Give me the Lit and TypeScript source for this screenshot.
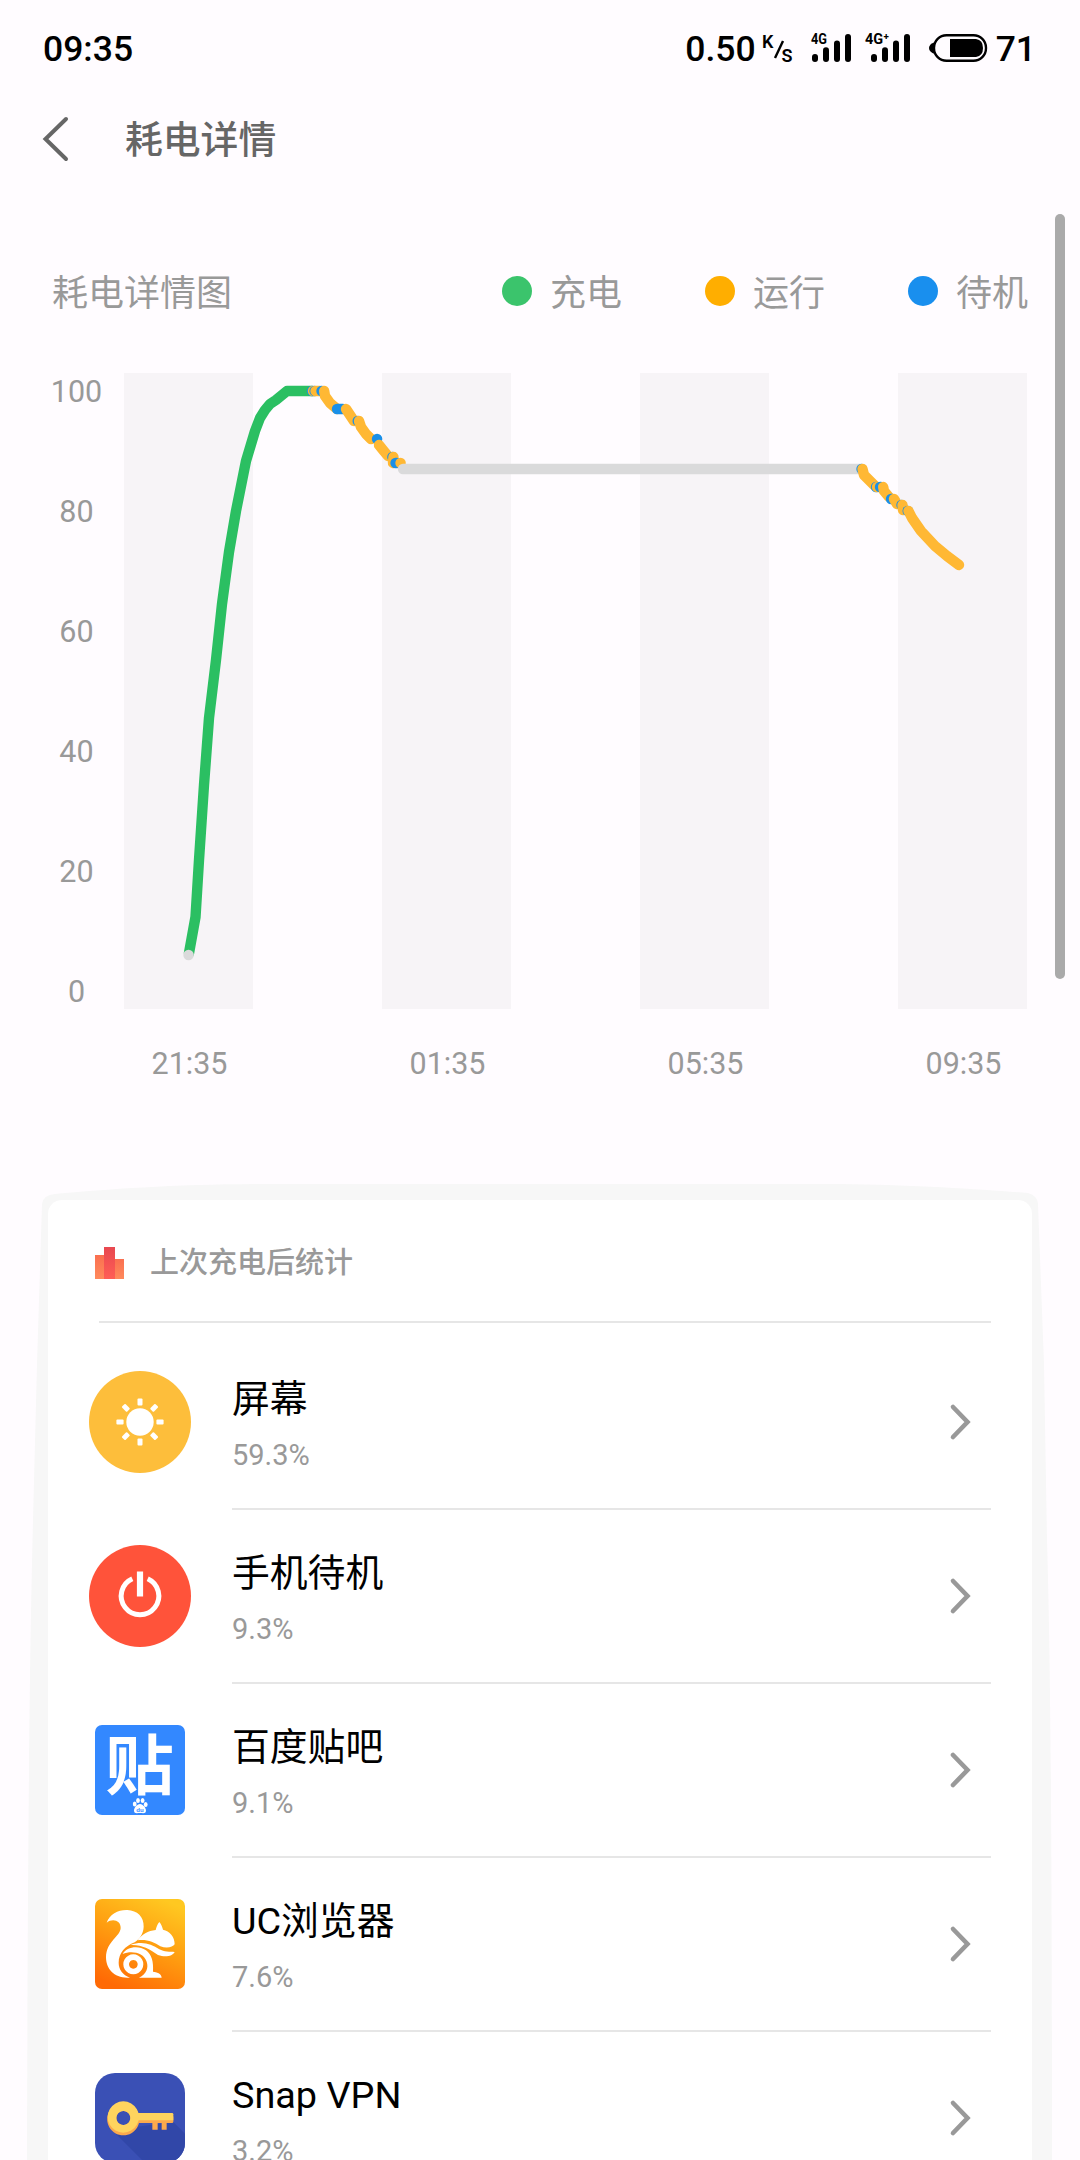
import { LitElement, html, css, svg } from 'lit';
import { customElement } from 'lit/decorators.js';

type Mode = 'charge' | 'run' | 'standby' | 'off';

interface Segment {
  mode: Mode;
  points: string;
}

interface Usage {
  icon: string;
  name: string;
  percent: string;
}

const LEGEND = [
  { mode: 'charge', label: '充电' },
  { mode: 'run', label: '运行' },
  { mode: 'standby', label: '待机' }
];

const LEVELS = [100, 80, 60, 40, 20, 0];
const TIMES = ['21:35', '01:35', '05:35', '09:35'];

// painted in order, later segments cover the ends of earlier ones
const SEGMENTS: Segment[] = [
  { mode: 'charge', points: '65,580 71.5,544 75,487 80,412 85,345 92,287 98,231 105,179 112,138 122,88 131,58 136,45 141,37 146,31 152,27 163,18 188,18' },
  { mode: 'off', points: '64.5,582 64.6,582' },
  { mode: 'standby', points: '188,18 188.1,18' },
  { mode: 'run', points: '189,18 190,18' },
  { mode: 'standby', points: '190.6,18 190.7,18' },
  { mode: 'run', points: '191.5,18 196,18' },
  { mode: 'standby', points: '197.5,18 198,18' },
  { mode: 'run', points: '200.2,18 201,23 206,30 213,36' },
  { mode: 'standby', points: '213,36 219,36' },
  { mode: 'run', points: '222,36 226,42 230,48' },
  { mode: 'standby', points: '233.7,48 233.8,48' },
  { mode: 'run', points: '235,48 237,54 242,61 247,66' },
  { mode: 'standby', points: '253,66 253.1,66' },
  { mode: 'run', points: '255,72 259,77 264,83' },
  { mode: 'standby', points: '268.4,84 268.5,84' },
  { mode: 'run', points: '269.5,84 269,90' },
  { mode: 'standby', points: '271.5,90 273,90' },
  { mode: 'run', points: '276.5,90 276.6,90' },
  { mode: 'off', points: '279,96 737,96' },
  { mode: 'standby', points: '737.5,96 737.6,96' },
  { mode: 'run', points: '738.5,96 740,102 745,107 750,112' },
  { mode: 'standby', points: '752,114 752.1,114' },
  { mode: 'run', points: '753,114 754,114' },
  { mode: 'standby', points: '756,114 757,114' },
  { mode: 'run', points: '759.2,114 760,118 765,124' },
  { mode: 'standby', points: '767,126 768,126' },
  { mode: 'run', points: '770,126 773,131' },
  { mode: 'standby', points: '777.5,132 777.6,132' },
  { mode: 'run', points: '778.5,132 779,137' },
  { mode: 'standby', points: '783.7,138 783.8,138' },
  { mode: 'run', points: '784.5,138 788,145 797,158 811,173 823,183 835,192' }
];

const USAGES: Usage[] = [
  { icon: 'screen', name: '屏幕', percent: '59.3%' },
  { icon: 'power', name: '手机待机', percent: '9.3%' },
  { icon: 'tieba', name: '百度贴吧', percent: '9.1%' },
  { icon: 'uc', name: 'UC浏览器', percent: '7.6%' },
  { icon: 'vpn', name: 'Snap VPN', percent: '3.2%' }
];

@customElement('status-bar')
export class StatusBar extends LitElement {

  static override styles = css`
    :host {
      display: flex;
      align-items: center;
      justify-content: space-between;
      height: 96px;
      padding: 0 44px 0 43px;
      box-sizing: border-box;
      color: #000;
      font-size: 35.5px;
      font-weight: 500;
    }

    .text { margin-top: 2px; }
    .right { display: flex; align-items: center; }
    svg { display: block; overflow: visible; }
    .speed { margin-left: 6px; }
    .signal-1 { margin-left: 15px; }
    .signal-2 { margin-left: 11px; }
    .battery { margin: 0 7px 0 16px; }
    .tiny { font-size: 14px; font-weight: 700; }
    .unit { font-size: 18px; font-weight: 600; }
  `;

  private bars(x: number) {
    return [0, 1, 2, 3].map(i => svg`
      <rect x=${x + i * 11} y=${21 - i * 6.7} width="6" height=${8 + i * 6.7} rx="3" />
    `);
  }

  override render() {
    return html`
      <span class="text">09:35</span>
      <div class="right">
        <span class="text">0.50</span>
        <svg class="speed" width="34" height="46" viewBox="0 -8 34 46">
          <text class="unit" x="0" y="15">K</text>
          <path d="M13 25 L21 8" stroke="#000" stroke-width="2.4" />
          <text class="unit" x="19.5" y="29">S</text>
        </svg>
        <svg class="signal-1" width="43" height="46" viewBox="0 -8 43 46">
          <text class="tiny" x="0" y="11" textLength="16" lengthAdjust="spacingAndGlyphs">4G</text>
          ${this.bars(1)}
        </svg>
        <svg class="signal-2" width="48" height="46" viewBox="0 -8 48 46">
          <text class="tiny" x="0" y="11" textLength="24" lengthAdjust="spacingAndGlyphs">4G⁺</text>
          ${this.bars(6)}
        </svg>
        <svg class="battery" width="60" height="30" viewBox="0 0 60 30">
          <path d="M6 9 Q0 11 0 15 Q0 19 6 21 Z" />
          <rect x="5" y="2.2" width="52" height="25.6" rx="12.5" fill="none" stroke="#000" stroke-width="2.4" />
          <path d="M21 6 H47 Q54 7 54 15 Q54 23 47 24 H21 Z" />
        </svg>
        <span class="text">71</span>
      </div>
    `;
  }
}

@customElement('power-chart')
export class PowerChart extends LitElement {

  static override styles = css`
    :host { display: block; color: #999; }

    .head {
      display: flex;
      align-items: center;
      height: 54px;
      padding: 0 52px;
      font-size: 36px;
    }

    .title { margin: -4px auto 0 0; }

    .key {
      display: flex;
      align-items: center;
      gap: 18px;
      margin: -4px 0 0 83px;
    }

    .dot {
      width: 30px;
      height: 30px;
      border-radius: 50%;
      margin-top: 2px;
    }

    .dot--charge { background: #3bc46c; }
    .dot--run { background: #ffae00; }
    .dot--standby { background: #198fee; }

    .body { display: flex; height: 636px; margin-top: 54px; }

    .levels {
      width: 95px;
      padding-left: 29px;
      font-size: 30.5px;
      text-align: center;
    }

    .level { height: 120px; line-height: 37px; }

    .plot {
      position: relative;
      display: grid;
      grid-template-columns: repeat(7, 1fr);
      width: 903px;
      height: 636px;
    }

    .band:nth-child(odd) { background: #f7f4f7; }

    .line {
      position: absolute;
      inset: 0;
      width: 904px;
      height: 636px;
      fill: none;
      stroke-width: 10.4;
      stroke-linecap: round;
      stroke-linejoin: round;
    }

    .line--charge { stroke: #2bbf62; }
    .line--run { stroke: #ffb834; }
    .line--standby { stroke: #198fe8; }
    .line--off { stroke: #dadadb; }

    .times {
      display: flex;
      justify-content: space-between;
      margin: 36px 52px 0 125px;
      font-size: 30.5px;
      line-height: 37px;
    }

    .time { width: 129px; text-align: center; }
  `;

  override render() {
    return html`
      <div class="head">
        <span class="title">耗电详情图</span>
        ${LEGEND.map(l => html`
          <span class="key"><span class="dot dot--${l.mode}"></span>${l.label}</span>
        `)}
      </div>
      <div class="body">
        <div class="levels">
          ${LEVELS.map(l => html`<div class="level">${l}</div>`)}
        </div>
        <div class="plot">
          ${[0, 1, 2, 3, 4, 5, 6].map(() => html`<div class="band"></div>`)}
          <svg class="line" viewBox="0 0 904 636">
            ${SEGMENTS.map(s => svg`<polyline class="line--${s.mode}" points=${s.points} />`)}
          </svg>
        </div>
      </div>
      <div class="times">
        ${TIMES.map(t => html`<span class="time">${t}</span>`)}
      </div>
    `;
  }
}

@customElement('usage-icon')
export class UsageIcon extends LitElement {

  declare name: string;

  static override properties = {
    name: { type: String }
  };

  constructor() {
    super();
    this.name = '';
  }

  static override styles = css`
    :host {
      display: flex;
      align-items: center;
      justify-content: center;
      width: 102px;
      height: 102px;
    }

    svg { display: block; }
    .glyph { font: 700 66px 'Noto Sans CJK SC', sans-serif; }
    .paw { font: 700 6px 'Liberation Sans', sans-serif; }
  `;

  override render() {
    switch (this.name) {
      case 'screen': return this.screen();
      case 'power': return this.power();
      case 'tieba': return this.tieba();
      case 'uc': return this.uc();
      default: return this.vpn();
    }
  }

  private screen() {
    return html`
      <svg width="102" height="102" viewBox="-51 -51 102 102">
        <circle r="51" fill="#fdbe3b" />
        <circle r="13.7" fill="#fff" />
        ${[0, 45, 90, 135, 180, 225, 270, 315].map(a => svg`
          <rect x="-2.5" y="-23.6" width="5" height="7.2" rx="1" fill="#fff" transform="rotate(${a})" />
        `)}
      </svg>
    `;
  }

  private power() {
    return html`
      <svg width="102" height="102" viewBox="-51 -51 102 102">
        <circle r="51" fill="#ff533a" />
        <path d="M-7.7 -17.2 A18.8 18.8 0 1 0 7.7 -17.2" fill="none" stroke="#fff" stroke-width="5" />
        <rect x="-3.1" y="-24.5" width="6.2" height="25" fill="#fff" />
      </svg>
    `;
  }

  private tieba() {
    return html`
      <svg width="90" height="90" viewBox="0 0 90 90">
        <rect width="90" height="90" rx="7" fill="#3388ff" />
        <g transform="translate(44.5 64) scale(1.04 0.98)">
          <text class="glyph" text-anchor="middle" fill="#fff">贴</text>
        </g>
        <g fill="#fff">
          <ellipse cx="39.7" cy="79" rx="1.9" ry="2.6" />
          <ellipse cx="43" cy="75.5" rx="1.9" ry="2.6" />
          <ellipse cx="47.6" cy="75.5" rx="1.9" ry="2.6" />
          <ellipse cx="50.7" cy="79.5" rx="1.9" ry="2.6" />
          <path d="M45 79 C48 79 51 83 51 85.5 C51 89 48 88 45 88 C42 88 39 89 39 85.5 C39 83 42 79 45 79 Z" />
        </g>
        <text class="paw" x="45" y="87" text-anchor="middle" fill="#3388ff">du</text>
      </svg>
    `;
  }

  private uc() {
    return html`
      <svg width="90" height="90" viewBox="75 117 270 270">
        <defs>
          <linearGradient id="uc" x1="0.75" y1="0" x2="0.3" y2="1">
            <stop offset="0" stop-color="#ffc821" />
            <stop offset="0.5" stop-color="#ff9c10" />
            <stop offset="1" stop-color="#ff6a05" />
          </linearGradient>
        </defs>
        <rect x="75" y="117" width="270" height="270" rx="21" fill="url(#uc)" />
        <g fill="#fff">
          <path d="M110 188 C119 162 145 149 172 150 C202 151 222 171 221 200 C220 222 209 237 194 247 C165 258 146 280 146 308 C146 328 158 345 180 353 C135 357 108 328 108 292 C109 243 151 230 152 204 C153 182 128 174 110 188 Z" />
          <path d="M203 241 C214 224 235 212 257 210 C260 198 264 190 268 186 C274 193 277 201 279 209 C299 213 314 230 314 253 C309 262 289 266 271 259 C252 246 229 237 203 241 Z" />
          <path d="M181 255 C214 243 243 250 268 268 C282 276 300 275 314 276 C308 288 287 293 264 285 C238 266 213 253 181 255 Z" />
          <path d="M158 282 C168 261 205 254 228 271 C245 284 251 305 249 335 C260 336 274 340 275 353 L207 353 C230 342 236 322 230 305 C221 277 184 271 158 282 Z" />
          <path fill-rule="evenodd" d="M190 283 A30 30 0 1 1 189.9 283 Z M190 300 A13 13 0 1 0 190.1 300 Z" />
        </g>
      </svg>
    `;
  }

  private vpn() {
    return html`
      <svg width="90" height="90" viewBox="75 98 270 270">
        <defs>
          <clipPath id="box"><rect x="75" y="98" width="270" height="270" rx="60" /></clipPath>
        </defs>
        <g clip-path="url(#box)">
          <rect x="75" y="98" width="270" height="270" fill="#3a50b5" />
          <path d="M126 269 L310 245 L360 295 V380 H237 Z" fill="#3147a8" />
        </g>
        <g fill="#fba94d">
          <path d="M247 240 H263 V268 H247 Z M275 240 H290 V268 H275 Z" />
          <rect x="195" y="226" width="115" height="22" rx="4" />
          <path fill-rule="evenodd" d="M160 188 A48.5 48.5 0 1 1 159.9 188 Z M160 212 A21 21 0 1 0 160.1 212 Z" />
        </g>
        <g fill="#ffd45e">
          <path d="M202 218 H306 Q310 218 310 222 V240 H202 Z" />
          <path fill-rule="evenodd" d="M160 183 A47 47 0 1 1 159.9 183 Z M160 212 A21 21 0 1 0 160.1 212 Z" />
        </g>
      </svg>
    `;
  }
}

@customElement('usage-card')
export class UsageCard extends LitElement {

  static override styles = css`
    :host { display: block; position: relative; height: 976px; }

    .shade { position: absolute; left: 0; top: 0; }

    .card {
      position: relative;
      margin: 0 48px;
      height: 976px;
      background: #fff;
      border-radius: 14px 14px 0 0;
      top: 16px;
    }

    .head {
      display: flex;
      align-items: center;
      gap: 25px;
      height: 121px;
      margin: 0 41px 0 47px;
      color: #999;
      font-size: 29px;
      font-weight: 500;
    }

    .bars { margin-top: 5px; }
    .label { margin-top: -1px; }
    .rule { height: 2px; margin: 0 41px 13px 51px; background: #e6e6e6; }
    .row { display: flex; height: 174px; padding: 0 41px; }
    usage-icon { margin: 35px 41px 0 0; }

    .info {
      flex: 1;
      display: flex;
      align-items: center;
      padding: 0 20px 0 0;
      border-bottom: 2px solid #e6e6e6;
    }

    .text { flex: 1; }
    .name { height: 57px; line-height: 56px; margin-top: 9px; color: #000; font-size: 37.8px; }
    .percent { height: 54px; line-height: 55px; color: #999; font-size: 29px; }
    .chevron { margin-top: -1px; }
  `;

  override render() {
    return html`
      <svg class="shade" width="1080" height="976" viewBox="0 0 1080 976">
        <path fill="#f7f7f7" d="M42 20 Q43 11 55 10 C110 5 180 0 270 0 H840 C920 1 990 6 1028 9 Q1038 12 1038 20
          L1044 180 L1047 356 C1050 460 1052 600 1052 976 H27 C28 600 30 460 33 336 L37 180 Z" />
      </svg>
      <div class="card">
        <div class="head">
          <svg class="bars" width="30" height="34" viewBox="0 0 30 34">
            <defs>
              <linearGradient id="side" x1="0" y1="0" x2="0" y2="1">
                <stop offset="0" stop-color="#fa6f50" />
                <stop offset="1" stop-color="#ff8a5c" />
              </linearGradient>
              <linearGradient id="mid" x1="0" y1="0" x2="0" y2="1">
                <stop offset="0" stop-color="#e84850" />
                <stop offset="1" stop-color="#ff5e55" />
              </linearGradient>
            </defs>
            <rect x="0" y="9" width="10" height="24" fill="url(#side)" />
            <rect x="19" y="13" width="10" height="20" fill="url(#side)" />
            <rect x="9" y="1" width="11" height="32" fill="url(#mid)" />
          </svg>
          <span class="label">上次充电后统计</span>
        </div>
        <div class="rule"></div>
        ${USAGES.map(u => html`
          <div class="row">
            <usage-icon name=${u.icon}></usage-icon>
            <div class="info">
              <div class="text">
                <div class="name">${u.name}</div>
                <div class="percent">${u.percent}</div>
              </div>
              <svg class="chevron" width="22" height="38" viewBox="0 0 22 38">
                <path d="M4 4 L18.5 19 L4 34" fill="none" stroke="#999" stroke-width="4.6" stroke-linecap="round" />
              </svg>
            </div>
          </div>
        `)}
      </div>
    `;
  }
}

@customElement('app-root')
export class AppRoot extends LitElement {

  static override styles = css`
    :host {
      display: block;
      position: relative;
      width: 1080px;
      height: 2160px;
      overflow: hidden;
      background: #fffcff;
      font-family: Roboto, 'Noto Sans CJK SC', sans-serif;
    }

    .nav {
      display: flex;
      align-items: center;
      gap: 56px;
      height: 86px;
      padding-left: 42px;
      color: #666;
      font-size: 37.8px;
      font-weight: 500;
    }

    .nav svg { display: block; }
    .nav-title { margin-top: -5px; }
    power-chart { margin-top: 83px; }
    usage-card { margin-top: 102px; }

    .scrollbar {
      position: absolute;
      left: 1055px;
      top: 214px;
      width: 10px;
      height: 765px;
      border-radius: 5px;
      background: #aaa;
    }
  `;

  override render() {
    return html`
      <status-bar></status-bar>
      <div class="nav">
        <svg width="27" height="46" viewBox="0 0 27 46">
          <path d="M24 3 L3.5 23 L24 43" fill="none" stroke="#666" stroke-width="4" stroke-linecap="round" />
        </svg>
        <span class="nav-title">耗电详情</span>
      </div>
      <power-chart></power-chart>
      <usage-card></usage-card>
      <div class="scrollbar"></div>
    `;
  }
}
